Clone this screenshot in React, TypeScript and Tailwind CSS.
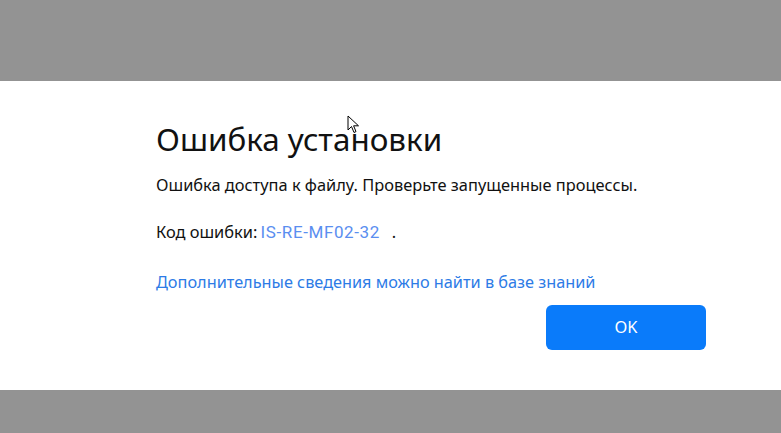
import React from "react";

export default function App() {
  return (
    <div className="w-[781px] h-[433px] flex flex-col bg-[#939393] overflow-hidden" style={{ fontFamily: '"Noto Sans", "Open Sans", sans-serif' }}>
      <div className="h-[81px] shrink-0" />
      <div className="relative h-[309px] bg-white shrink-0 pl-[156px] pr-[75px] pt-[38px]">
        <h1 className="text-[31.4px] leading-[40px] text-[#111]">Ошибка установки</h1>
        <p className="mt-[15px] text-[16.4px] leading-[22px] text-[#111]">Ошибка доступа к файлу. Проверьте запущенные процессы.</p>
        <p className="mt-[25px] text-[16.4px] leading-[22px] text-[#111]">
          Код ошибки: <span className="ml-[-1px] text-[#5a8ef0] text-[17px] tracking-[0.6px]" style={{ fontFamily: 'Roboto, sans-serif' }}>IS-RE-MF02-32</span>
          <span className="ml-[12px]">.</span>
        </p>
        <p className="mt-[28px] text-[16.3px] leading-[22px] text-[#2d7be6]">Дополнительные сведения можно найти в базе знаний</p>
        <div className="flex justify-end mt-[12px]">
          <button className="w-[160px] h-[45px] rounded-[6px] bg-[#0a7bfa] text-white text-[16.4px]">OK</button>
        </div>
        <svg className="absolute left-[347px] top-[34px]" width="14" height="20" viewBox="0 0 14 20">
          <path d="M1 1 L1 15 L4.5 11.5 L7 17.5 L9 16.6 L6.6 10.8 L11.5 10.8 Z" fill="#fff" stroke="#000" strokeWidth="1" strokeLinejoin="round" />
        </svg>
      </div>
      <div className="flex-1" />
    </div>
  );
}
